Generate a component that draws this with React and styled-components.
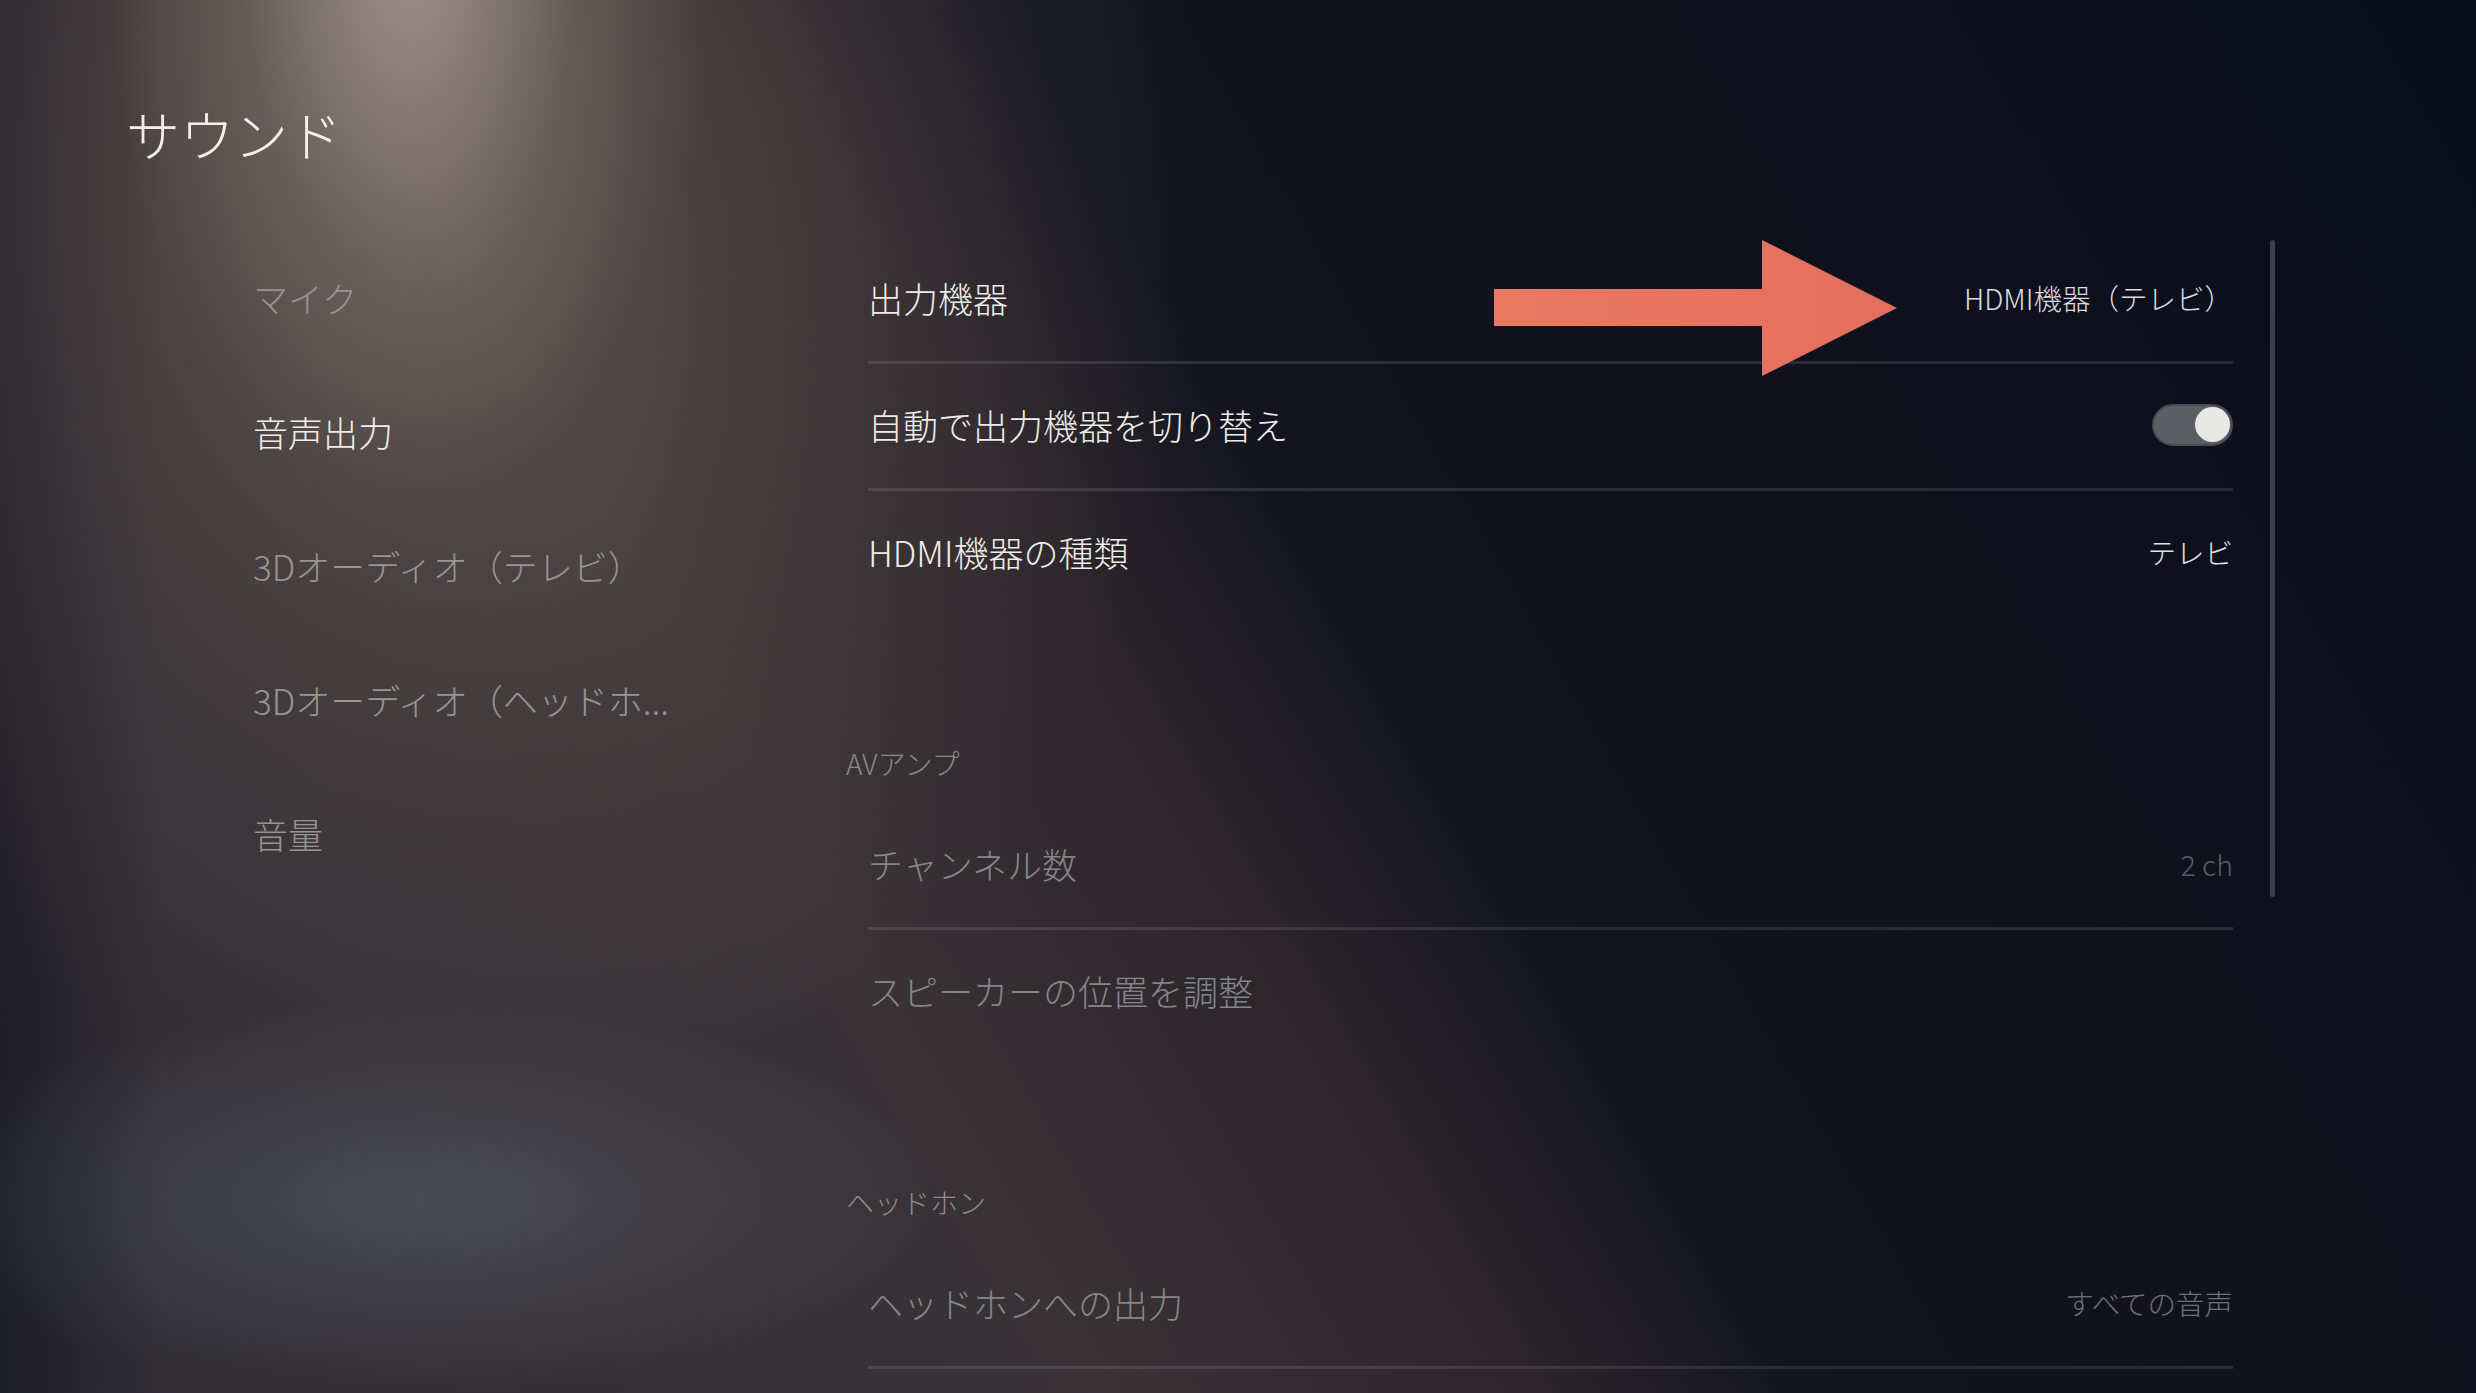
import styled, { createGlobalStyle } from "styled-components";

const GlobalStyle = createGlobalStyle`
  html, body {
    margin: 0;
    padding: 0;
    background: #0a0d1b;
    overflow: hidden;
  }
  * {
    box-sizing: border-box;
  }
`;

const FONT = `"Noto Sans CJK JP", "Noto Sans", sans-serif`;

const Screen = styled.div`
  position: relative;
  width: 2476px;
  height: 1393px;
  overflow: hidden;
  font-family: ${FONT};
  font-weight: 300;
  background:
    radial-gradient(ellipse 640px 250px at 420px 1200px, rgba(96, 102, 112, 0.5), transparent 80%),
    radial-gradient(ellipse 380px 720px at 410px -60px, rgba(205, 190, 176, 0.65) 0%, rgba(160, 145, 135, 0.28) 45%, transparent 80%),
    radial-gradient(ellipse 1000px 1250px at 450px 200px, rgba(128, 112, 104, 0.5) 0%, rgba(100, 88, 84, 0.25) 45%, transparent 75%),
    linear-gradient(90deg, rgba(14, 14, 24, 0.5) 0, transparent 160px),
    linear-gradient(60deg, #2e2d33 0%, #393336 34%, #2b252a 47%, #13141f 55%, #0a0d1b 100%);
`;

const Header = styled.header`
  padding: 99px 0 0 126px;
  margin-bottom: 62px;
`;

const Title = styled.h1`
  margin: 0;
  font-size: 54px;
  line-height: 70px;
  font-weight: 300;
  color: #f3efeb;
`;

const Body = styled.div`
  display: flex;
  align-items: flex-start;
  padding-left: 253px;
`;

const Nav = styled.nav`
  width: 593px;
  display: flex;
  flex-direction: column;
`;

const NavItem = styled.div`
  height: 134px;
  line-height: 134px;
  font-size: 35px;
  color: ${(p) => (p.$active ? "#f1ede9" : "#9a9391")};
  white-space: nowrap;
`;

const List = styled.div`
  width: 1387px;
  margin-top: 6px;
  display: flex;
  flex-direction: column;
`;

const Row = styled.div`
  height: 127px;
  margin-left: 22px;
  display: flex;
  align-items: center;
  justify-content: space-between;
  padding-bottom: 3px;
  border-bottom: 3px solid ${(p) => (p.$line ? "rgba(255, 255, 255, 0.11)" : "transparent")};
`;

const Label = styled.span`
  font-size: 35px;
  color: ${(p) => (p.$dim ? "#84858b" : "#eeecea")};
`;

const Value = styled.span`
  font-size: 28.5px;
  color: ${(p) => p.$color || "#dcdce0"};
`;

const SectionTitle = styled.div`
  margin: 120px 0 15px;
  line-height: 50px;
  font-size: 28px;
  color: #8b898b;
`;

const Toggle = styled.div`
  width: 81px;
  height: 42px;
  border-radius: 21px;
  background: #5c5e63;
  border: 2px solid #474a50;
  display: flex;
  align-items: center;
  justify-content: flex-end;
  padding-right: 1px;
`;

const Knob = styled.div`
  width: 35px;
  height: 35px;
  border-radius: 50%;
  background: #e8e8e4;
`;

const ScrollTrack = styled.div`
  width: 5px;
  height: 657px;
  margin: 9px 0 0 37px;
  border-radius: 3px;
  background: #3a3f4e;
`;

const Arrow = styled.svg`
  position: absolute;
  left: 1494px;
  top: 240px;
`;

const navItems = [
  { label: "マイク" },
  { label: "音声出力", active: true },
  { label: "3Dオーディオ（テレビ）" },
  { label: "3Dオーディオ（ヘッドホ..." },
  { label: "音量" },
];

const App = () => {
  return (
    <Screen>
      <GlobalStyle />
      <Header>
        <Title>サウンド</Title>
      </Header>
      <Body>
        <Nav>
          {navItems.map((item) => (
            <NavItem key={item.label} $active={item.active}>
              {item.label}
            </NavItem>
          ))}
        </Nav>
        <List>
          <Row $line>
            <Label>出力機器</Label>
            <Value>HDMI機器（テレビ）</Value>
          </Row>
          <Row $line>
            <Label>自動で出力機器を切り替え</Label>
            <Toggle>
              <Knob />
            </Toggle>
          </Row>
          <Row>
            <Label>HDMI機器の種類</Label>
            <Value $color="#e2e2e4">テレビ</Value>
          </Row>

          <SectionTitle>AVアンプ</SectionTitle>
          <Row $line>
            <Label $dim>チャンネル数</Label>
            <Value $color="#5b5e68">2 ch</Value>
          </Row>
          <Row>
            <Label $dim>スピーカーの位置を調整</Label>
          </Row>

          <SectionTitle>ヘッドホン</SectionTitle>
          <Row $line>
            <Label $dim>ヘッドホンへの出力</Label>
            <Value $color="#6d707a">すべての音声</Value>
          </Row>
        </List>
        <ScrollTrack />
      </Body>
      <Arrow width="403" height="136" viewBox="0 0 403 136">
        <defs>
          <linearGradient id="arrowFill" x1="0" x2="1" y1="0" y2="0">
            <stop offset="0" stopColor="#e97a62" />
            <stop offset="1" stopColor="#e36e5d" />
          </linearGradient>
        </defs>
        <polygon
          points="0,49 268,49 268,0 403,68 268,136 268,86 0,86"
          fill="url(#arrowFill)"
        />
      </Arrow>
    </Screen>
  );
};

export default App;
